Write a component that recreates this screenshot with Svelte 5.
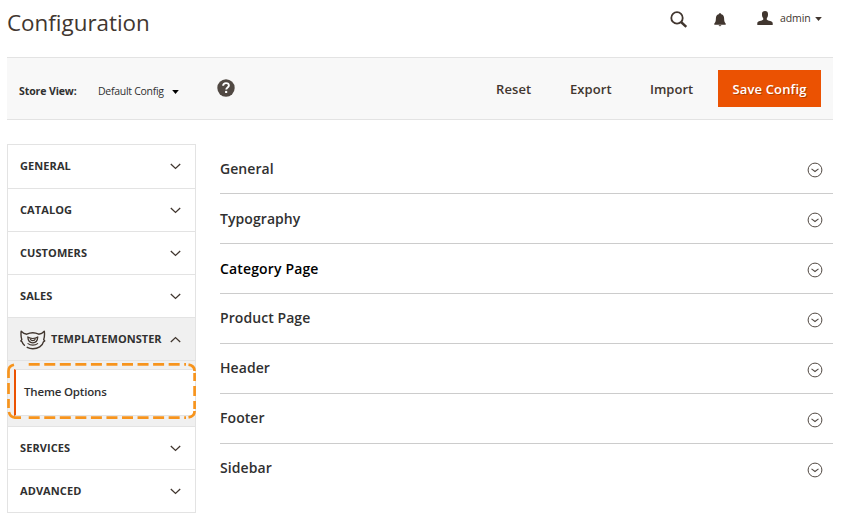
<script>
  const before = ['General', 'Catalog', 'Customers', 'Sales'];
  const after = ['Services', 'Advanced'];
  const sections = ['General', 'Typography', 'Category Page', 'Product Page', 'Header', 'Footer', 'Sidebar'];
</script>

{#snippet chevron(up)}
  <svg class="chevron" class:up width="11" height="7" viewBox="0 0 11 7">
    <path d="M.8 1 5.5 5.4 10.2 1" fill="none" stroke="#41362f" stroke-width="1.3" />
  </svg>
{/snippet}

{#snippet caret()}
  <svg class="caret" width="7" height="4" viewBox="0 0 7 4"><path d="M.2 0H6.8L3.5 4Z" fill="currentColor" /></svg>
{/snippet}

<div class="page">
  <header>
    <h1>Configuration</h1>
    <div class="tools">
      <svg class="search" width="18" height="17" viewBox="0 0 18 17" fill="none" stroke="#41362f">
        <circle cx="7" cy="6.9" r="5.7" stroke-width="1.8" />
        <path d="M11 11 16.3 15.9" stroke-width="2.4" />
      </svg>
      <svg class="bell" width="12" height="14" viewBox="0 0 12 14" fill="#41362f">
        <path d="M6 .2C6.9.2 7.2.8 7.3 1.2 9.3 1.7 10.1 3.3 10.1 5.3 10.1 8.5 10.8 9.6 11.7 10.4V11.7H.3V10.4C1.2 9.6 1.9 8.5 1.9 5.3 1.9 3.3 2.7 1.7 4.7 1.2 4.8.8 5.1.2 6 .2ZM4.6 12.3H7.4Q7.2 13.3 6 13.3T4.6 12.3Z" />
      </svg>
      <svg class="user" width="16" height="14" viewBox="0 0 16 14" fill="#41362f">
        <path d="M8 0C10.2 0 11.1 1.3 11 3.4 11 5.2 10.5 6.2 9.8 7.1V8.8C11 9.9 15.5 10 15.7 12V14H.3V12C.5 10 5 9.9 6.2 8.8V7.1C5.5 6.2 5 5.2 5 3.4 4.9 1.3 5.8 0 8 0Z" />
      </svg>
      <span class="admin">admin</span>
      {@render caret()}
    </div>
  </header>

  <div class="bar">
    <b class="label">Store View:</b>
    <span class="store">Default Config</span>
    {@render caret()}
    <svg class="help" width="18" height="18" viewBox="0 0 18 18">
      <circle cx="9" cy="9" r="8.7" fill="#514943" />
      <path d="M6.1 6.8C6.2 4.9 7.4 4.1 9 4.1 10.8 4.1 11.9 5.1 11.9 6.5 11.9 8.5 9.2 8.5 9.2 10.6" fill="none" stroke="#fff" stroke-width="1.9" />
      <rect x="8.1" y="11.9" width="2.1" height="2.1" fill="#fff" />
    </svg>
    <div class="actions">
      <span class="reset">Reset</span>
      <span class="export">Export</span>
      <span class="import">Import</span>
      <button>Save Config</button>
    </div>
  </div>

  <div class="content">
    <nav>
      {#each before as name}
        <div class="tab"><span>{name}</span>{@render chevron(false)}</div>
      {/each}
      <div class="tab open">
        <svg class="monster" width="26" height="20" viewBox="0 0 26 20" fill="none" stroke="#41362f" stroke-width="1.4" stroke-linejoin="round" stroke-linecap="round">
          <path d="M4.4 15.2C3.2 14.2 2.4 13 2.1 11.8L.8 11 1.8 9.6C1 7 .8 4 1.2 1.2 2.9 3 4.8 4 6.8 4.2 10.5 2.3 15 2.3 18.7 4.2 20.8 4 22.7 3 24.3 1.2 24.7 4 24.5 7 23.7 9.6L24.7 11 23.4 11.8C22.5 16 18 18.7 12.8 18.7 10.6 18.7 8.7 18.1 7.2 17.3" />
          <path d="M7.8 6.9C8 10.8 9.8 12.8 12.8 12.8S17.6 10.8 17.8 6.9Q15.5 8.5 12.8 8.5T7.8 6.9Z" stroke-width="1.2" />
          <path d="M10.4 9.2C11 11.2 14.6 11.2 15.2 9.2M8 13.6C10.4 15.5 15.2 15.5 17.6 13.6" stroke-width="1.2" />
        </svg>
        <span>TemplateMonster</span>{@render chevron(true)}
      </div>
      <div class="sub">
        <div class="option">Theme Options</div>
        <svg class="highlight" width="190" height="58" viewBox="0 0 190 58" fill="none" stroke="#f7941d" stroke-width="2.7">
          <path d="M21.7 2.4H179M21.7 55.6H179" stroke-dasharray="11 4.55" />
          <path d="M1.5 21V32M1.5 37V46M187.6 11V19M187.6 24V34M187.6 39V47" />
          <path d="M1.5 16V9Q1.5 4 7 2.8M181.5 2.6Q187.6 3.5 187.6 9M187.6 49Q187.6 54.5 181.5 55.4M14 55.6H8Q3 55 1.9 50" />
        </svg>
      </div>
      {#each after as name}
        <div class="tab"><span>{name}</span>{@render chevron(false)}</div>
      {/each}
    </nav>

    <main>
      {#each sections as name, i}
        <section class:hovered={name === 'Category Page'} class:lower={i > 2}>
          <span>{name}</span>
          <svg width="16" height="16" viewBox="0 0 16 16" fill="none" stroke="#514943">
            <circle cx="8" cy="8" r="6.9" stroke-width="1" />
            <path d="M4.5 6.9 8 9.5 11.5 6.9" stroke-width="1.1" />
          </svg>
        </section>
      {/each}
    </main>
  </div>
</div>

<style>
  :global(body) { margin: 0; background: #fff; }
  .page { width: 846px; height: 524px; overflow: hidden; box-sizing: border-box; padding-left: 7px; font-family: "Open Sans", "Noto Sans", sans-serif; color: #303030; }
  svg { display: block; flex: none; }
  header { height: 57px; display: flex; justify-content: space-between; width: 826px; }
  h1 { margin: 7px 0 0; font-size: 22.4px; line-height: 32px; font-weight: 400; color: #41362f; white-space: nowrap; }
  .tools { display: flex; align-items: center; height: 37px; padding-right: 11px; font-size: 10.5px; color: #41362f; }
  .search { margin-top: 1px; }
  .bell { margin: 2px 0 0 26px; }
  .user { margin: -1px 7px 0 31px; }
  .admin { width: 35px; letter-spacing: -.1px; padding-bottom: 2px; }
  .bar { width: 826px; height: 63px; box-sizing: border-box; background: #f8f8f8; border-top: 1px solid #e3e3e3; border-bottom: 1px solid #e3e3e3; display: flex; align-items: center; padding: 0 12px; white-space: nowrap; }
  .label { width: 79px; font-size: 10.5px; font-weight: 700; padding-top: 5px; letter-spacing: -.1px; }
  .store { width: 74px; font-size: 10.5px; padding-top: 5px; letter-spacing: -.28px; }
  .bar .caret { color: #000; margin-top: 6px; }
  .help { margin: -2px 0 0 38px; }
  .actions { margin-left: auto; display: flex; align-items: center; font-size: 13px; font-weight: 600; color: #41362f; }
  .reset { width: 74px; }
  .export { width: 80px; }
  .import { width: 68px; }
  .reset, .export { letter-spacing: .1px; }
  button { width: 103px; height: 37px; border: 0; padding: 0; background: #eb5202; color: #fff; font: inherit; letter-spacing: .15px; text-shadow: 1px 1px 0 rgba(0, 0, 0, .25); }
  .content { display: flex; padding-top: 24px; }
  nav { width: 189px; box-sizing: border-box; border: 1px solid #e3e3e3; flex: none; height: 369px; }
  .tab { height: 43px; box-sizing: border-box; border-bottom: 1px solid #e3e3e3; display: flex; align-items: center; justify-content: space-between; padding: 0 14px 0 12px; font-size: 11px; font-weight: 700; text-transform: uppercase; letter-spacing: .08px; }
  .tab span { padding-bottom: 2px; }
  .tab:first-child { height: 44px; }
  .tab:last-child { border: 0; }
  .open { background: #f0f0f0; }
  .open span { margin-right: auto; letter-spacing: .04px; }
  .monster { margin: 1px 5px 0 0; }
  .up { transform: scaleY(-1); }
  .sub { height: 66px; box-sizing: border-box; background: #f0f0f0; border-bottom: 1px solid #e3e3e3; padding: 8px 0 0 6px; position: relative; }
  .option { height: 47px; box-sizing: border-box; background: #fff; border-left: 2px solid #eb5202; border-top: 1px solid #e3e3e3; border-bottom: 1px solid #e3e3e3; padding-left: 8px; font-size: 11.5px; letter-spacing: -.18px; line-height: 43px; font-weight: 600; }
  .highlight { position: absolute; left: -1px; top: 1px; }
  main { width: 613px; margin-left: 24px; }
  section { height: 50px; box-sizing: border-box; border-bottom: 1px solid #ccc; display: flex; align-items: center; justify-content: space-between; padding: 2px 10px 0 0; font-size: 14px; font-weight: 600; letter-spacing: .07px; }
  section span { padding-bottom: 2px; }
  .lower span { padding-bottom: 4px; }
  section:last-child { border-color: transparent; }
  .hovered { color: #000; letter-spacing: .15px; }
</style>
